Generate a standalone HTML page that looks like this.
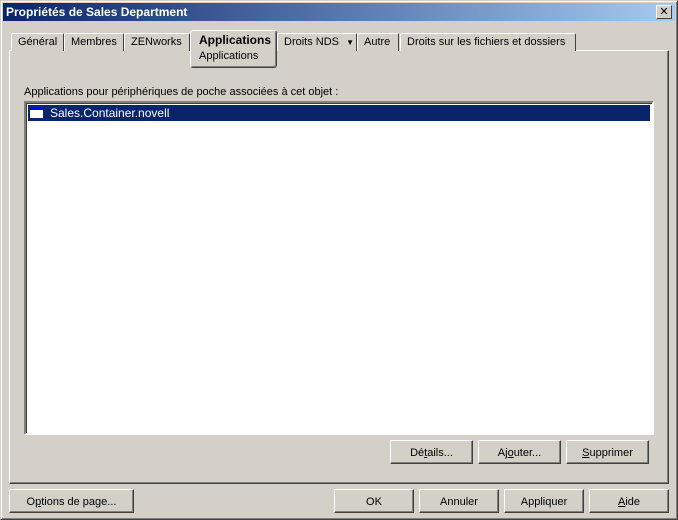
<!DOCTYPE html>
<html><head><meta charset="utf-8"><style>
*{margin:0;padding:0;box-sizing:border-box}
body{width:678px;height:520px;background:#d4d0c8;font-family:"Liberation Sans",sans-serif;font-size:11px;color:#000;position:relative;overflow:hidden}
.win{position:absolute;left:0;top:0;width:678px;height:520px;border:1px solid;border-color:#d4d0c8 #404040 #404040 #d4d0c8;box-shadow:inset 1px 1px #fff,inset -1px -1px #808080}
.title{position:absolute;left:3px;top:3px;width:672px;height:18px;background:linear-gradient(to right,#0a246a,#a6caf0);color:#fff;font-weight:bold;font-size:12px;line-height:18px;padding-left:3px}
.x{position:absolute;right:3px;top:2px;width:16px;height:14px;background:#d4d0c8;border:1px solid;border-color:#fff #404040 #404040 #fff;color:#000;font-size:11px;line-height:12px;text-align:center;font-weight:normal}
.a{position:absolute}
.tab{position:absolute;top:33px;height:18px;border:1px solid;border-bottom:none;border-color:#fff #404040 #404040 #fff;border-radius:2px 2px 0 0;line-height:17px;padding-left:6px;background:#d4d0c8}
.panel{position:absolute;left:9px;top:50px;width:660px;height:434px;border:1px solid;border-color:#fff #404040 #404040 #fff;box-shadow:inset -1px -1px #808080}
.btn{position:absolute;height:24px;border:1px solid;border-color:#fff #404040 #404040 #fff;box-shadow:inset -1px -1px #808080;text-align:center;line-height:25px;background:#d4d0c8}
.list{position:absolute;left:24px;top:101px;width:630px;height:334px;background:#fff;border:2px solid;border-color:#808080 #fff #fff #808080;box-shadow:inset 1px 1px #404040}
</style></head><body>
<div class="win"></div>
<div class="title">Propriétés de Sales Department<div class="x">✕</div></div>
<div class="panel"></div>
<div class="tab" style="left:11px;width:53px">Général</div>
<div class="tab" style="left:64px;width:60px">Membres</div>
<div class="tab" style="left:124px;width:66px">ZENworks</div>
<div class="tab" style="left:277px;width:80px">Droits NDS <span style="font-size:8px;margin-left:4px">▼</span></div>
<div class="tab" style="left:357px;width:42px">Autre</div>
<div class="tab" style="left:400px;width:176px">Droits sur les fichiers et dossiers</div>
<div class="a" style="left:190px;top:30px;width:87px;height:38px;background:#d4d0c8;border:1px solid;border-color:#fff #404040 #404040 #fff;border-radius:3px;box-shadow:inset -1px -1px #808080;padding-left:8px;line-height:15px;padding-top:2px"><b style="font-size:12px">Applications</b><br>Applications</div>
<div class="a" style="left:24px;top:86px">Applications pour périphériques de poche associées à cet objet :</div>
<div class="list"><div style="position:absolute;left:2px;top:2px;width:622px;height:16px;background:#0a246a;color:#fff;font-size:12px;line-height:16px;padding-left:22px"><span style="position:absolute;left:2px;top:3px;width:13px;height:10px;background:#fff;border-top:2px solid #00f"></span>Sales.Container.novell</div></div>
<div class="btn" style="left:390px;top:440px;width:83px">Dé<u>t</u>ails...</div>
<div class="btn" style="left:478px;top:440px;width:83px">Aj<u>o</u>uter...</div>
<div class="btn" style="left:566px;top:440px;width:83px"><u>S</u>upprimer</div>
<div class="btn" style="left:9px;top:489px;width:125px">O<u>p</u>tions de page...</div>
<div class="btn" style="left:334px;top:489px;width:80px">OK</div>
<div class="btn" style="left:419px;top:489px;width:80px">Annuler</div>
<div class="btn" style="left:504px;top:489px;width:80px">Appliquer</div>
<div class="btn" style="left:589px;top:489px;width:80px"><u>A</u>ide</div>
</body></html>
